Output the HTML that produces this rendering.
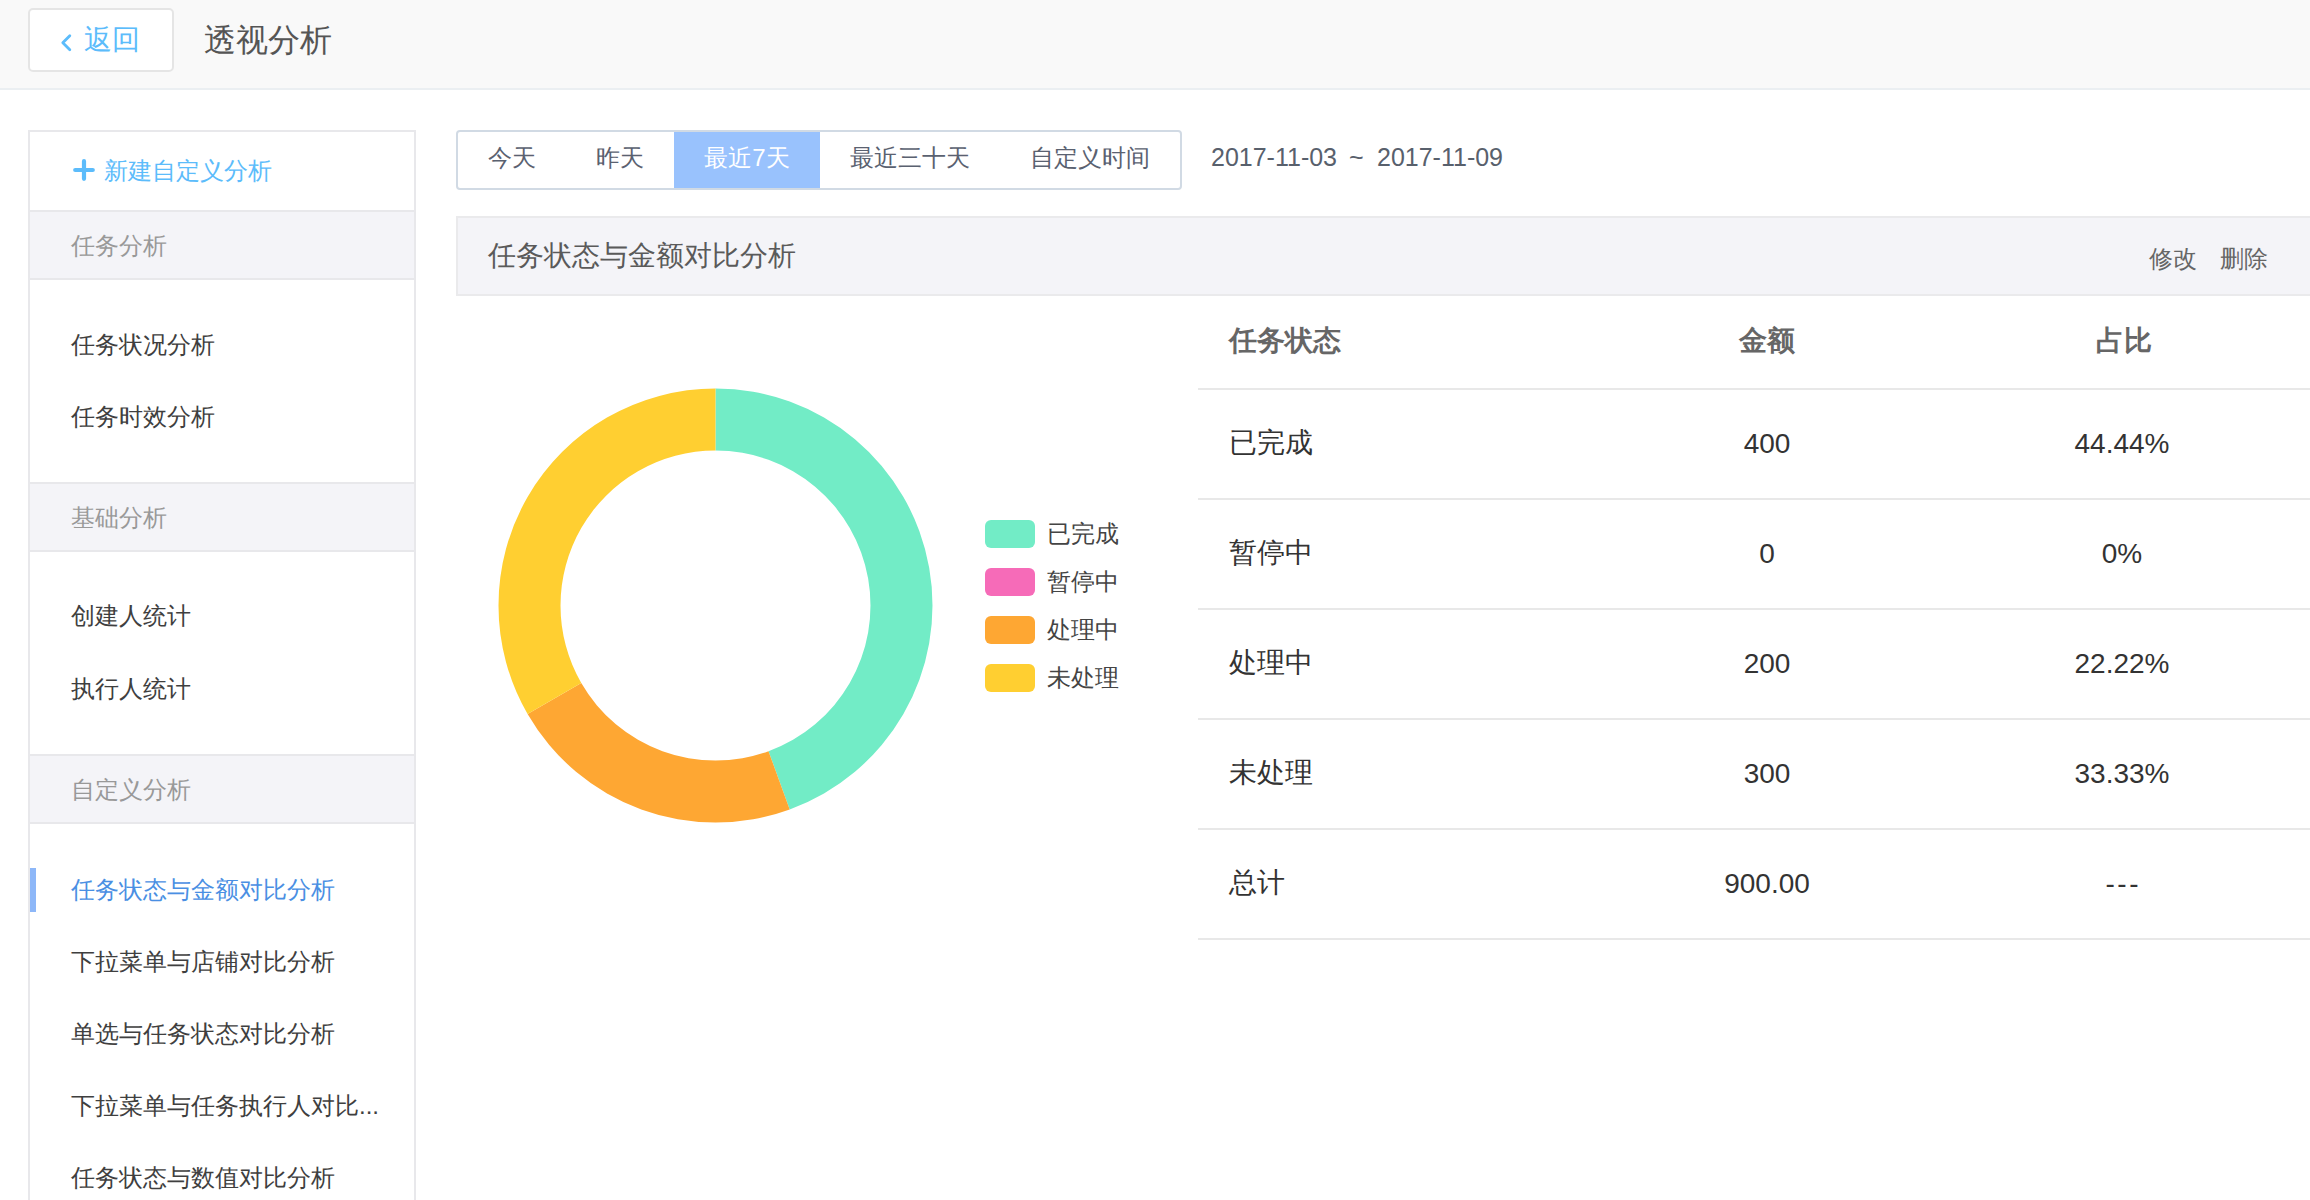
<!DOCTYPE html>
<html><head><meta charset="utf-8">
<style>
*{box-sizing:border-box;margin:0;padding:0}
html,body{width:2310px;height:1200px;overflow:hidden;background:#fff;font-family:"Liberation Sans",sans-serif;color:#333}
.a{position:absolute;white-space:nowrap}
#hdr{position:absolute;left:0;top:0;width:2310px;height:90px;background:#f9f9f9;border-bottom:2px solid #ebeff2}
#back{position:absolute;left:28px;top:8px;width:146px;height:64px;background:#fff;border:2px solid #e5e5e5;border-radius:5px}
#side{position:absolute;left:28px;top:130px;width:388px;height:1200px;border:2px solid #e8e8eb;background:#fff}
.grp{position:absolute;left:0;width:384px;height:70px;background:#f4f4f8;border-top:2px solid #e8e8eb;border-bottom:2px solid #e8e8eb}
.gt{position:absolute;left:41px;font-size:24px;color:#999;line-height:24px}
.it{position:absolute;left:41px;font-size:24px;color:#3f3f3f;line-height:24px}
#tabs{position:absolute;left:456px;top:130px;width:726px;height:60px;border:2px solid #d1dae4;border-radius:4px;background:#fff}
.tb{position:absolute;top:0;height:56px;font-size:24px;line-height:52px;color:#5a6170;text-align:center}
#panelh{position:absolute;left:456px;top:216px;width:1860px;height:80px;background:#f4f4f8;border:2px solid #eaeaec;border-right:none}
.line{position:absolute;left:1198px;width:1112px;height:2px;background:#e8e8e8}
.th{position:absolute;font-size:28px;font-weight:bold;color:#666;line-height:28px}
.td{position:absolute;font-size:28px;color:#333;line-height:28px}
.lg{position:absolute;left:985px;width:50px;height:28px;border-radius:6px}
.lt{position:absolute;left:1046.5px;font-size:24px;color:#444;line-height:24px}
</style></head><body>
<div id="hdr">
  <div id="back">
    <svg class="a" style="left:30px;top:22px" width="14" height="22" viewBox="0 0 14 22"><path d="M9.8 3.8 L2.8 10.8 L9.8 17.8" fill="none" stroke="#5cbcfb" stroke-width="2.8" stroke-linecap="round" stroke-linejoin="round"/></svg>
    <div class="a" style="left:54px;top:16px;font-size:28px;line-height:28px;color:#5cbcfb">返回</div>
  </div>
  <div class="a" style="left:204px;top:24px;font-size:32px;line-height:32px;color:#555">透视分析</div>
</div>

<div id="side">
  <svg class="a" style="left:42px;top:26px" width="24" height="24" viewBox="0 0 24 24"><path d="M12 3.2 V20.8 M3.2 12 H20.8" fill="none" stroke="#5cbcfb" stroke-width="4.2" stroke-linecap="round"/></svg>
  <div class="a" style="left:74px;top:26.5px;font-size:24px;line-height:24px;color:#5cbcfb">新建自定义分析</div>

  <div class="grp" style="top:78px"><div class="gt" style="top:22px">任务分析</div></div>
  <div class="it" style="top:201px">任务状况分析</div>
  <div class="it" style="top:273px">任务时效分析</div>

  <div class="grp" style="top:350px"><div class="gt" style="top:22px">基础分析</div></div>
  <div class="it" style="top:472px">创建人统计</div>
  <div class="it" style="top:545px">执行人统计</div>

  <div class="grp" style="top:622px"><div class="gt" style="top:22px">自定义分析</div></div>
  <div class="a" style="left:0;top:736px;width:6px;height:44px;background:#8db7f8"></div>
  <div class="it" style="top:746px;color:#4a8fe3">任务状态与金额对比分析</div>
  <div class="it" style="top:818px">下拉菜单与店铺对比分析</div>
  <div class="it" style="top:890px">单选与任务状态对比分析</div>
  <div class="it" style="top:962px">下拉菜单与任务执行人对比...</div>
  <div class="it" style="top:1034px">任务状态与数值对比分析</div>
</div>

<div id="tabs">
  <div class="tb" style="left:0;width:108px">今天</div>
  <div class="tb" style="left:108px;width:108px">昨天</div>
  <div class="tb" style="left:216px;width:146px;background:#99c2fd;color:#fff;top:0">最近7天</div>
  <div class="tb" style="left:362px;width:180px">最近三十天</div>
  <div class="tb" style="left:542px;width:180px">自定义时间</div>
</div>
<div class="a" style="left:1211px;top:145px;font-size:25px;line-height:25px;color:#58606c">2017-11-03</div><div class="a" style="left:1349px;top:145px;font-size:25px;line-height:25px;color:#58606c">~</div><div class="a" style="left:1377px;top:145px;font-size:25px;line-height:25px;color:#58606c">2017-11-09</div>

<div id="panelh">
  <div class="a" style="left:30px;top:24px;font-size:28px;line-height:28px;color:#5a5a5a">任务状态与金额对比分析</div>
  <div class="a" style="left:1691px;top:29px;font-size:24px;line-height:24px;color:#666">修改</div>
  <div class="a" style="left:1762px;top:29px;font-size:24px;line-height:24px;color:#666">删除</div>
</div>

<svg class="a" style="left:0;top:0" width="1200" height="1200" viewBox="0 0 1200 1200" id="donut"><path d="M715.50 388.50 A217 217 0 0 1 789.72 809.41 L768.51 751.15 A155 155 0 0 0 715.50 450.50 Z" fill="#72ecc6"/><path d="M789.72 809.41 A217 217 0 0 1 527.57 714.00 L581.27 683.00 A155 155 0 0 0 768.51 751.15 Z" fill="#fea733"/><path d="M527.57 714.00 A217 217 0 0 1 715.50 388.50 L715.50 450.50 A155 155 0 0 0 581.27 683.00 Z" fill="#ffcf31"/></svg>

<div class="lg" style="top:520px;background:#72ecc6"></div>
<div class="lg" style="top:568px;background:#f66bb8"></div>
<div class="lg" style="top:616px;background:#fea733"></div>
<div class="lg" style="top:664px;background:#ffcf31"></div>
<div class="lt" style="top:522px">已完成</div>
<div class="lt" style="top:570px">暂停中</div>
<div class="lt" style="top:618px">处理中</div>
<div class="lt" style="top:666px">未处理</div>

<div class="th" style="left:1229px;top:327px">任务状态</div>
<div class="th" style="left:1739px;top:327px">金额</div>
<div class="th" style="left:2096px;top:327px">占比</div>
<div class="line" style="top:388px"></div>
<div class="line" style="top:498px"></div>
<div class="line" style="top:608px"></div>
<div class="line" style="top:718px"></div>
<div class="line" style="top:828px"></div>
<div class="line" style="top:938px"></div>

<div class="td" style="left:1229px;top:429px">已完成</div>
<div class="td" style="left:1229px;top:539px">暂停中</div>
<div class="td" style="left:1229px;top:649px">处理中</div>
<div class="td" style="left:1229px;top:759px">未处理</div>
<div class="td" style="left:1229px;top:869px">总计</div>
<div class="td" style="left:1667px;width:200px;text-align:center;top:430px">400</div>
<div class="td" style="left:2022px;width:200px;text-align:center;top:430px">44.44%</div>
<div class="td" style="left:1667px;width:200px;text-align:center;top:540px">0</div>
<div class="td" style="left:2022px;width:200px;text-align:center;top:540px">0%</div>
<div class="td" style="left:1667px;width:200px;text-align:center;top:650px">200</div>
<div class="td" style="left:2022px;width:200px;text-align:center;top:650px">22.22%</div>
<div class="td" style="left:1667px;width:200px;text-align:center;top:760px">300</div>
<div class="td" style="left:2022px;width:200px;text-align:center;top:760px">33.33%</div>
<div class="td" style="left:1667px;width:200px;text-align:center;top:870px">900.00</div>
<div class="td" style="left:2022px;width:200px;text-align:center;top:870px;letter-spacing:2.5px;padding-left:2.5px">---</div>
</body></html>
